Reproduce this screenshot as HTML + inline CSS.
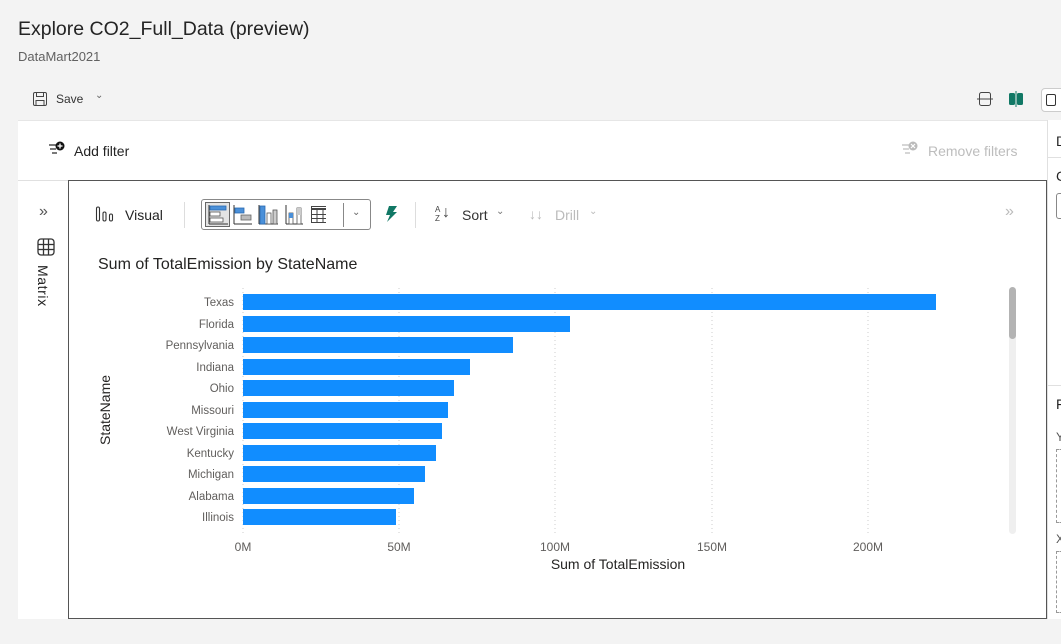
<!DOCTYPE html>
<html><head><meta charset="utf-8"><style>
*{margin:0;padding:0;box-sizing:border-box}
body{width:1061px;height:644px;background:#f3f3f3;font-family:"Liberation Sans",sans-serif;color:#242424;position:relative;overflow:hidden}
.a{position:absolute}
</style></head><body>
<div class="a" style="left:18px;top:18px;font-size:19.5px;color:#242424">Explore CO2_Full_Data (preview)</div>
<div class="a" style="left:18px;top:49px;font-size:13px;color:#616161">DataMart2021</div>
<svg class="a" style="left:32px;top:91px" width="16" height="16" viewBox="0 0 16 16" fill="none" stroke="#444" stroke-width="1"><rect x="1.5" y="1.5" width="13" height="13" rx="1.5"/><rect x="4.5" y="1.5" width="7" height="4"/><rect x="4" y="9.5" width="8" height="5"/></svg>
<div class="a" style="left:56px;top:92px;font-size:12px;color:#333">Save</div>
<div class="a" style="left:95px;top:90px;font-size:10px;color:#666">&#8964;</div>
<svg class="a" style="left:977px;top:91px" width="16" height="16" viewBox="0 0 16 16" fill="none" stroke="#444"><rect x="2.5" y="1.5" width="11" height="13" rx="2"/><line x1="0" y1="8" x2="16" y2="8"/></svg>
<svg class="a" style="left:1008px;top:91px" width="17" height="16"><rect x="1" y="2" width="6" height="12" rx="1.5" fill="#117865"/><rect x="9" y="2" width="6" height="12" rx="1.5" fill="#117865"/><line x1="8" y1="0" x2="8" y2="16" stroke="#117865"/></svg>
<div class="a" style="left:1041px;top:88px;width:30px;height:24px;border:1px solid #ccc;border-radius:4px;background:#fff"></div>
<div class="a" style="left:1046px;top:94px;width:10px;height:12px;border:1px solid #333;border-radius:2px"></div>
<div class="a" style="left:18px;top:120px;width:1029px;height:499px;background:#fff;border-top:1px solid #e6e6e6"></div>
<div class="a" style="left:18px;top:180px;width:1029px;height:1px;background:#e0e0e0"></div>
<svg class="a" style="left:47px;top:141px" width="20" height="16"><g stroke="#222" stroke-width="1.2"><line x1="2" y1="4" x2="9" y2="4"/><line x1="3" y1="8" x2="9" y2="8"/><line x1="5" y1="12" x2="10" y2="12"/></g><circle cx="13" cy="5" r="4.5" fill="#111"/><g stroke="#fff" stroke-width="1.3"><line x1="10.5" y1="5" x2="15.5" y2="5"/><line x1="13" y1="2.5" x2="13" y2="7.5"/></g></svg>
<div class="a" style="left:74px;top:143px;font-size:14px;color:#242424">Add filter</div>
<svg class="a" style="left:900px;top:141px" width="20" height="16"><g stroke="#bbb" stroke-width="1.2"><line x1="2" y1="4" x2="9" y2="4"/><line x1="3" y1="8" x2="9" y2="8"/><line x1="5" y1="12" x2="10" y2="12"/></g><circle cx="13" cy="5" r="4.5" fill="#bbb"/><g stroke="#fff" stroke-width="1.2"><line x1="11" y1="3" x2="15" y2="7"/><line x1="15" y1="3" x2="11" y2="7"/></g></svg>
<div class="a" style="left:928px;top:143px;font-size:14px;color:#bdbdbd">Remove filters</div>
<div class="a" style="left:39px;top:203px;font-size:16px;color:#555">&#187;</div>
<svg class="a" style="left:37px;top:238px" width="18" height="18" fill="none" stroke="#333" stroke-width="1.3"><rect x="1" y="1" width="16" height="16" rx="3"/><line x1="1" y1="6.5" x2="17" y2="6.5"/><line x1="1" y1="11.5" x2="17" y2="11.5"/><line x1="6.5" y1="1" x2="6.5" y2="17"/><line x1="11.5" y1="1" x2="11.5" y2="17"/></svg>
<div class="a" style="left:35px;top:265px;font-size:14px;color:#242424;writing-mode:vertical-rl;letter-spacing:0.6px">Matrix</div>
<div class="a" style="left:1047px;top:120px;width:1px;height:499px;background:#e0e0e0"></div>
<div class="a" style="left:1048px;top:120px;width:13px;height:499px;background:#fff"></div>
<div class="a" style="left:1056px;top:133px;font-size:14px">D</div>
<div class="a" style="left:1048px;top:157px;width:13px;height:1px;background:#e0e0e0"></div>
<div class="a" style="left:1056px;top:168px;font-size:14px">C</div>
<div class="a" style="left:1056px;top:193px;width:10px;height:26px;border:1px solid #888;border-radius:3px"></div>
<div class="a" style="left:1048px;top:385px;width:13px;height:1px;background:#e0e0e0"></div>
<div class="a" style="left:1056px;top:396px;font-size:14px">F</div>
<div class="a" style="left:1056px;top:430px;font-size:12px;color:#555">Y</div>
<div class="a" style="left:1056px;top:449px;width:10px;height:74px;border:1px dashed #999"></div>
<div class="a" style="left:1056px;top:532px;font-size:12px;color:#555">X</div>
<div class="a" style="left:1056px;top:551px;width:10px;height:62px;border:1px dashed #999"></div>
<div class="a" style="left:68px;top:180px;width:979px;height:439px;border:1px solid #555"></div>
<svg class="a" style="left:95px;top:205px" width="20" height="18" fill="none" stroke="#333" stroke-width="1.1"><rect x="1.5" y="2" width="3" height="14" rx="1.5"/><rect x="8" y="7" width="3" height="9" rx="1.5"/><rect x="14.5" y="9" width="3" height="7" rx="1.5"/></svg>
<div class="a" style="left:125px;top:207px;font-size:14px;color:#242424">Visual</div>
<div class="a" style="left:184px;top:202px;width:1px;height:26px;background:#ddd"></div>
<div class="a" style="left:201px;top:199px;width:170px;height:31px;border:1px solid #888;border-radius:3px"></div>
<div class="a" style="left:205px;top:202px;width:25px;height:25px;background:#e3e3e3;border:1px solid #666"></div>
<svg class="a" style="left:206px;top:203px" width="120" height="24">
<g transform="translate(2,2)"><line x1="1" y1="0" x2="1" y2="19" stroke="#333"/><line x1="1" y1="19" x2="20" y2="19" stroke="#333"/><rect x="2" y="1" width="16" height="4" fill="#4a90d9" stroke="#2a6ab0" stroke-width=".8"/><rect x="2" y="7" width="10" height="4" fill="#fff" stroke="#555" stroke-width=".8"/><rect x="2" y="13" width="13" height="4" fill="#fff" stroke="#555" stroke-width=".8"/></g>
<g transform="translate(27,2)"><line x1="1" y1="0" x2="1" y2="19" stroke="#333"/><line x1="1" y1="19" x2="19" y2="19" stroke="#333"/><rect x="2" y="3" width="9" height="5" fill="#4a90d9" stroke="#2a6ab0" stroke-width=".8"/><rect x="8" y="10" width="10" height="5" fill="#bbb" stroke="#666" stroke-width=".8"/></g>
<g transform="translate(52,2)"><line x1="1" y1="0" x2="1" y2="19" stroke="#333"/><line x1="1" y1="19" x2="20" y2="19" stroke="#333"/><rect x="2" y="1" width="5" height="18" fill="#4a90d9" stroke="#2a6ab0" stroke-width=".8"/><rect x="9" y="8" width="4" height="11" fill="#fff" stroke="#555" stroke-width=".8"/><rect x="15" y="5" width="4" height="14" fill="#ccc" stroke="#555" stroke-width=".8"/></g>
<g transform="translate(79,2)"><line x1="1" y1="0" x2="1" y2="19" stroke="#333"/><line x1="1" y1="19" x2="18" y2="19" stroke="#333"/><rect x="4" y="8" width="4" height="11" fill="#fff" stroke="#555" stroke-width=".8"/><rect x="4" y="8" width="4" height="5" fill="#4a90d9"/><rect x="12" y="3" width="4" height="16" fill="#fff" stroke="#555" stroke-width=".8"/><rect x="12" y="3" width="4" height="7" fill="#ccc"/></g>
<g transform="translate(105,3)" fill="none" stroke="#444"><rect x=".5" y=".5" width="17" height="16"/><line x1="0" y1="3" x2="18" y2="3" stroke-width="2"/><line x1="0" y1="8.5" x2="18" y2="8.5"/><line x1="0" y1="12.5" x2="18" y2="12.5"/><line x1="6" y1="3" x2="6" y2="17"/><line x1="12" y1="3" x2="12" y2="17"/></g>
</svg>
<div class="a" style="left:343px;top:203px;width:1px;height:24px;background:#888"></div>
<div class="a" style="left:352px;top:207px;font-size:10px;color:#666">&#8964;</div>
<svg class="a" style="left:383px;top:205px" width="16" height="18"><path d="M6 1h8l-4 6h4L4 17l3-7H3z" fill="#117865"/></svg>
<div class="a" style="left:415px;top:202px;width:1px;height:26px;background:#ddd"></div>
<div class="a" style="left:435px;top:205px;font-size:8px;line-height:9px;color:#444">A<br>Z</div>
<div class="a" style="left:442px;top:204px;font-size:16px;color:#444">&#8595;</div>
<div class="a" style="left:462px;top:207px;font-size:14px;color:#333">Sort</div>
<div class="a" style="left:496px;top:206px;font-size:10px;color:#777">&#8964;</div>
<div class="a" style="left:529px;top:206px;font-size:14px;color:#bbb">&#8595;&#8595;</div>
<div class="a" style="left:555px;top:207px;font-size:14px;color:#bbb">Drill</div>
<div class="a" style="left:589px;top:206px;font-size:10px;color:#bbb">&#8964;</div>
<div class="a" style="left:1005px;top:203px;font-size:16px;color:#bbb">&#187;</div>
<div class="a" style="left:98px;top:256px;font-size:16px;color:#252423">Sum of TotalEmission by StateName</div>
<div class="a" style="left:1009px;top:287px;width:7px;height:247px;background:#efefef;border-radius:4px"></div>
<div class="a" style="left:1009px;top:287px;width:7px;height:52px;background:#b3b3b3;border-radius:4px"></div>
<svg class="a" style="left:68px;top:280px" width="940" height="300" font-family="Liberation Sans, sans-serif">
<g stroke="#ccc" stroke-dasharray="1,3"><line x1="175" y1="8" x2="175" y2="255"/><line x1="331" y1="8" x2="331" y2="255"/><line x1="487" y1="8" x2="487" y2="255"/><line x1="644" y1="8" x2="644" y2="255"/><line x1="800" y1="8" x2="800" y2="255"/></g>
<g fill="#118dff">
<rect x="175" y="14" width="693" height="16"/>
<rect x="175" y="36" width="327" height="16"/>
<rect x="175" y="57" width="270" height="16"/>
<rect x="175" y="79" width="227" height="16"/>
<rect x="175" y="100" width="211" height="16"/>
<rect x="175" y="122" width="205" height="16"/>
<rect x="175" y="143" width="199" height="16"/>
<rect x="175" y="165" width="193" height="16"/>
<rect x="175" y="186" width="182" height="16"/>
<rect x="175" y="208" width="171" height="16"/>
<rect x="175" y="229" width="153" height="16"/>
</g>
<g font-size="11.5" fill="#605e5c" text-anchor="end">
<text x="166" y="26">Texas</text><text x="166" y="48">Florida</text><text x="166" y="69">Pennsylvania</text><text x="166" y="91">Indiana</text><text x="166" y="112">Ohio</text><text x="166" y="134">Missouri</text><text x="166" y="155">West Virginia</text><text x="166" y="177">Kentucky</text><text x="166" y="198">Michigan</text><text x="166" y="220">Alabama</text><text x="166" y="241">Illinois</text>
</g>
<g font-size="12" fill="#605e5c" text-anchor="middle">
<text x="175" y="271">0M</text><text x="331" y="271">50M</text><text x="487" y="271">100M</text><text x="644" y="271">150M</text><text x="800" y="271">200M</text>
</g>
<text x="550" y="289" font-size="14" fill="#252423" text-anchor="middle">Sum of TotalEmission</text>
<text transform="translate(42,130) rotate(-90)" font-size="14" fill="#252423" text-anchor="middle">StateName</text>
</svg>
</body></html>
